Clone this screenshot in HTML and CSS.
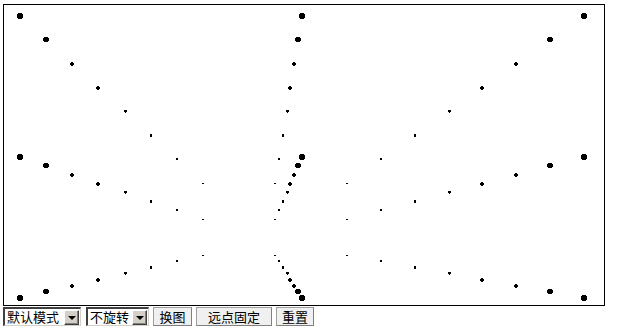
FILE: index.html
```html
<!DOCTYPE html>
<html>
<head>
<meta charset="utf-8">
<link rel="stylesheet" href="styles.css">
</head>
<body>
<div class="stage">
<svg class="dots" width="600" height="300" viewBox="0 0 600 300" shape-rendering="crispEdges">
<defs>
<path id="d0" d="M-2,-3h4v1h1v4h-1v1h-4v-1h-1v-4h1z"/>
<path id="d1" d="M-2,-3h4v1h1v3h-1v1h-4v-1h-1v-3h1z"/>
<path id="d2" d="M-1,-2h2v1h1v2h-1v1h-2v-1h-1v-2h1z"/>
<path id="d4" d="M-1,-1h3v2h-1v1h-1v-1h-1z"/>
<path id="d5" d="M-1,-1h2v3h-2z"/>
<path id="d6" d="M-1,-1h2v2h-2z"/>
<path id="d7" d="M-1,0h2v1h-2z"/>
</defs>
<g fill="#000">
<!-- row 0 -->
<use href="#d0" x="16" y="11"/><use href="#d1" x="42" y="35"/><use href="#d2" x="68" y="59"/><use href="#d2" x="94" y="83"/><use href="#d4" x="121" y="106"/><use href="#d5" x="147" y="130"/><use href="#d6" x="173" y="154"/><use href="#d7" x="199" y="178"/>
<use href="#d0" x="298" y="11"/><use href="#d1" x="294" y="35"/><use href="#d2" x="290" y="59"/><use href="#d2" x="286" y="83"/><use href="#d4" x="283" y="106"/><use href="#d5" x="279" y="130"/><use href="#d6" x="275" y="154"/><use href="#d7" x="271" y="178"/>
<use href="#d0" x="580" y="11"/><use href="#d1" x="546" y="35"/><use href="#d2" x="512" y="59"/><use href="#d2" x="478" y="83"/><use href="#d4" x="445" y="106"/><use href="#d5" x="411" y="130"/><use href="#d6" x="377" y="154"/><use href="#d7" x="343" y="178"/>
<!-- row 1 -->
<use href="#d0" x="16" y="152"/><use href="#d1" x="42" y="161"/><use href="#d2" x="68" y="170"/><use href="#d2" x="94" y="179"/><use href="#d4" x="121" y="187"/><use href="#d5" x="147" y="196"/><use href="#d6" x="173" y="205"/><use href="#d7" x="199" y="214"/>
<use href="#d0" x="298" y="152"/><use href="#d1" x="294" y="161"/><use href="#d2" x="290" y="170"/><use href="#d2" x="286" y="179"/><use href="#d4" x="283" y="187"/><use href="#d5" x="279" y="196"/><use href="#d6" x="275" y="205"/><use href="#d7" x="271" y="214"/>
<use href="#d0" x="580" y="152"/><use href="#d1" x="546" y="161"/><use href="#d2" x="512" y="170"/><use href="#d2" x="478" y="179"/><use href="#d4" x="445" y="187"/><use href="#d5" x="411" y="196"/><use href="#d6" x="377" y="205"/><use href="#d7" x="343" y="214"/>
<!-- row 2 -->
<use href="#d0" x="16" y="293"/><use href="#d1" x="42" y="287"/><use href="#d2" x="68" y="281"/><use href="#d2" x="94" y="275"/><use href="#d4" x="121" y="268"/><use href="#d5" x="147" y="262"/><use href="#d6" x="173" y="256"/><use href="#d7" x="199" y="250"/>
<use href="#d0" x="298" y="293"/><use href="#d1" x="294" y="287"/><use href="#d2" x="290" y="281"/><use href="#d2" x="286" y="275"/><use href="#d4" x="283" y="268"/><use href="#d5" x="279" y="262"/><use href="#d6" x="275" y="256"/><use href="#d7" x="271" y="250"/>
<use href="#d0" x="580" y="293"/><use href="#d1" x="546" y="287"/><use href="#d2" x="512" y="281"/><use href="#d2" x="478" y="275"/><use href="#d4" x="445" y="268"/><use href="#d5" x="411" y="262"/><use href="#d6" x="377" y="256"/><use href="#d7" x="343" y="250"/>
</g>
</svg>
</div>
<div class="controls">
  <div class="select sel-mode"><span class="sel-text">默认模式</span><span class="arrow"></span></div>
  <div class="select sel-rot"><span class="sel-text">不旋转</span><span class="arrow"></span></div>
  <div class="btn btn-swap">换图</div>
  <div class="btn btn-fix">远点固定</div>
  <div class="btn btn-reset">重置</div>
</div>
</body>
</html>
```
FILE: styles.css
```css
html, body {
  margin: 0;
  background: #fff;
}
body {
  padding: 4px 0 0 3px;
  font-family: "Noto Sans CJK SC", "Noto Sans", sans-serif;
  font-size: 12px;
  color: #000;
}
.stage {
  width: 600px;
  height: 300px;
  border: 1px solid #000;
  background: #fff;
}
.dots {
  display: block;
}
.controls {
  display: flex;
  align-items: flex-start;
  margin-top: 1px;
  height: 19px;
  font-size: 13px;
}
.select {
  box-sizing: border-box;
  height: 19px;
  display: flex;
  align-items: center;
  justify-content: space-between;
  border-top: 2px solid #404040;
  border-left: 2px solid #404040;
  border-right: 1px solid #d4d0c8;
  border-bottom: 1px solid #d4d0c8;
  background: #fff;
  padding-left: 2px;
  padding-right: 1px;
}
.sel-mode { width: 78px; }
.sel-rot { width: 63px; margin-left: 5px; }
.sel-text {
  line-height: 16px;
  white-space: nowrap;
}
.arrow {
  box-sizing: border-box;
  width: 15px;
  height: 15px;
  background: #d4d0c8;
  border-top: 1px solid #fff;
  border-left: 1px solid #fff;
  border-right: 1px solid #404040;
  border-bottom: 1px solid #404040;
  box-shadow: inset -1px -1px 0 #808080;
  display: flex;
  align-items: center;
  justify-content: center;
}
.arrow::after {
  content: "";
  width: 0;
  height: 0;
  border-left: 4px solid transparent;
  border-right: 4px solid transparent;
  border-top: 4px solid #000;
  margin-top: 1px;
}
.btn {
  box-sizing: border-box;
  height: 19px;
  display: flex;
  align-items: center;
  justify-content: center;
  background: #f0f0f0;
  border: 1px solid #a0a0a0;
  border-right-color: #808080;
  border-bottom-color: #808080;
  line-height: 16px;
  white-space: nowrap;
}
.btn-swap { width: 39px; margin-left: 4px; }
.btn-fix { width: 76px; margin-left: 4px; }
.btn-reset { width: 38px; margin-left: 4px; }
```
